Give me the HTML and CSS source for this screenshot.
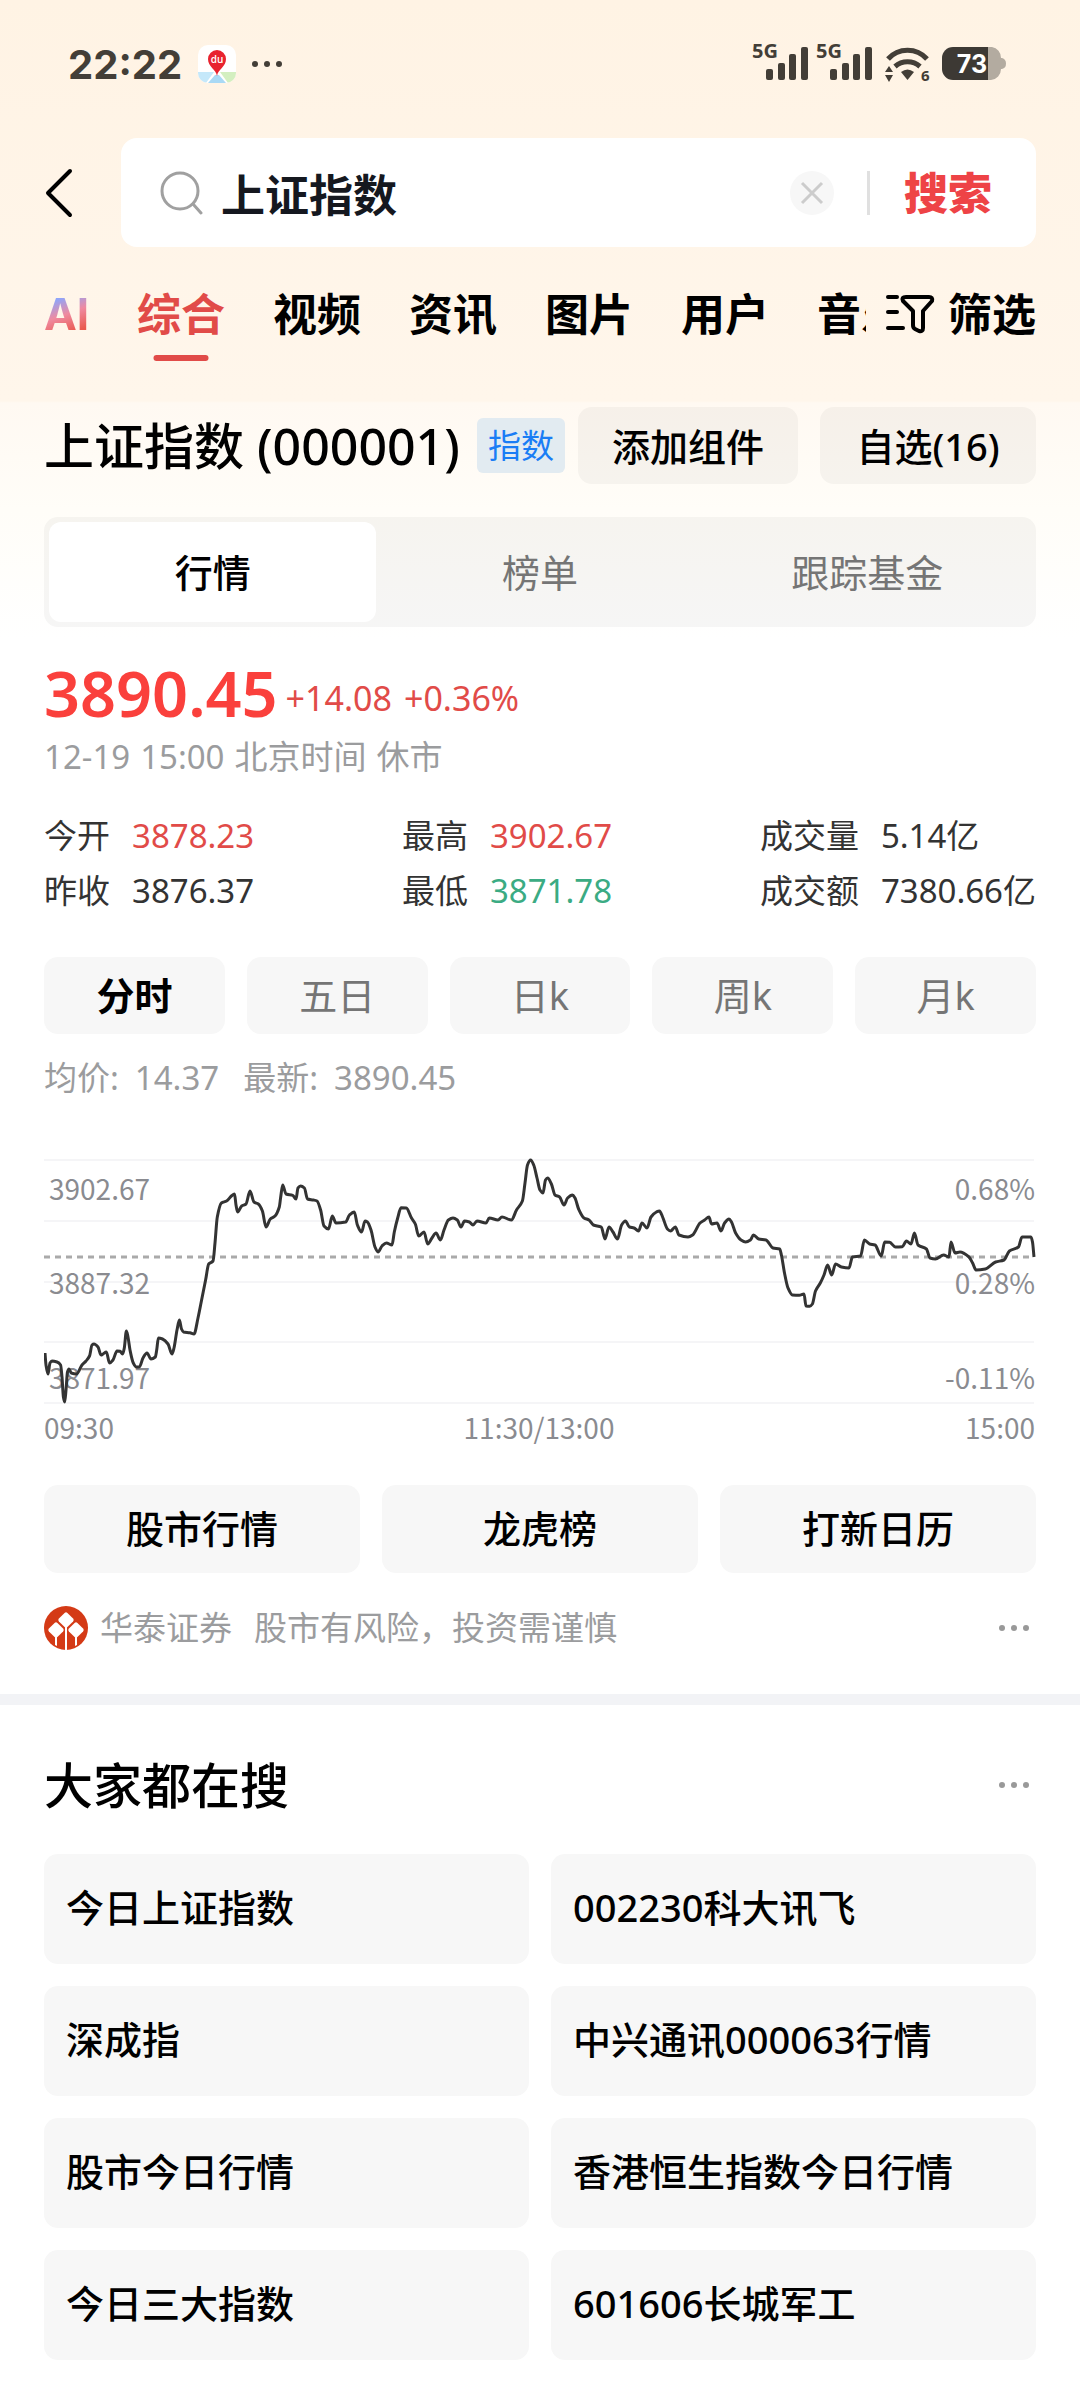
FILE: index.html
```html
<!DOCTYPE html>
<html lang="zh-CN">
  <head>
    <meta charset="utf-8" />
    <meta name="viewport" content="width=device-width, initial-scale=1.0" />
    <title>上证指数</title>
    <link rel="stylesheet" href="styles.css">
  </head>
  <body>
    <header class="header">
      <div class="status-bar">
        <span class="status-time">22:22</span>
        <svg class="map-icon" width="38" height="38" viewBox="0 0 38 38" aria-hidden="true">
          <defs>
            <clipPath id="mapClip"><rect width="38" height="38" rx="10" /></clipPath>
          </defs>
          <g clip-path="url(#mapClip)">
            <rect width="38" height="38" fill="#fff" />
            <path d="M0 27h16L8 38H0z" fill="#c5e8fa" />
            <path d="M22 27h16v11h-8z" fill="#d3efc0" />
            <path d="M17 30h4l7 8H10z" fill="#a9d9f5" />
          </g>
          <path d="M19 31c-1-7-9-9-9-17a9 9 0 0 1 18 0c0 8-8 10-9 17z" fill="#e8232f" />
          <text x="19" y="18" class="map-icon-text">du</text>
        </svg>
        <svg class="status-more" width="32" height="8" viewBox="0 0 32 8" aria-hidden="true">
          <circle cx="4" cy="4" r="3" /><circle cx="16" cy="4" r="3" /><circle cx="28" cy="4" r="3" />
        </svg>
        <div class="status-right">
          <svg width="57" height="56" viewBox="0 -5 57 56" aria-hidden="true">
            <text x="0" y="17" class="signal-text">5G</text>
            <rect x="14" y="28" width="7" height="11" rx="2" />
            <rect x="26" y="22" width="7" height="17" rx="2" />
            <rect x="37" y="13" width="7" height="26" rx="2" />
            <rect x="49" y="6" width="7" height="33" rx="2" />
          </svg>
          <svg width="57" height="56" viewBox="0 -5 57 56" aria-hidden="true">
            <text x="0" y="17" class="signal-text">5G</text>
            <rect x="14" y="28" width="7" height="11" rx="2" />
            <rect x="26" y="22" width="7" height="17" rx="2" />
            <rect x="37" y="13" width="7" height="26" rx="2" />
            <rect x="49" y="6" width="7" height="33" rx="2" />
          </svg>
          <svg class="wifi-icon" width="48" height="56" viewBox="0 -10 48 56" aria-hidden="true">
            <path d="M4 13A26 26 0 0 1 43 13M11 20.5A19 19 0 0 1 36 20.5" fill="none" stroke="#433e37" stroke-width="5" />
            <path d="M17 26q6.500-5 13 0l-6.500 8z" />
            <path d="M5 20l4 6H1zM5 36l4-7H1z" />
            <text x="37" y="35" class="wifi-text">6</text>
          </svg>
          <svg class="battery-icon" width="64" height="56" viewBox="0 -5 64 56" aria-hidden="true">
            <path d="M46 6h4a11 11 0 0 1 9 11h1q4 1 4 5.500t-4 5.500h-1a11 11 0 0 1-10 11h-3z" fill="#b3aba0" />
            <path d="M11 6h35v33H11A11 11 0 0 1 0 28V17A11 11 0 0 1 11 6z" fill="#3d3934" />
            <text x="30" y="32" class="battery-text">73</text>
          </svg>
        </div>
      </div>

      <form class="search-row">
        <a class="back" href="#" aria-label="返回">
          <svg width="30" height="50" viewBox="0 0 30 50">
            <path d="M26 3L4 25l22 22" fill="none" stroke="#000" stroke-width="4" stroke-linecap="round" stroke-linejoin="round" />
          </svg>
        </a>
        <div class="search-box">
          <svg width="44" height="46" viewBox="0 0 44 46" aria-hidden="true">
            <circle cx="21" cy="21" r="18" fill="none" stroke="#a0a0a0" stroke-width="3" />
            <path d="M34 34l8 9" stroke="#a0a0a0" stroke-width="3" stroke-linecap="round" />
          </svg>
          <input class="search-input" type="text" value="上证指数" aria-label="搜索词" />
          <button class="clear" type="button" aria-label="清空">
            <svg width="44" height="44" viewBox="0 0 44 44">
              <circle cx="22" cy="22" r="22" fill="#f7f7f7" />
              <path d="M12 12l20 20M32 12L12 32" stroke="#ccc" stroke-width="3" />
            </svg>
          </button>
          <span class="divider"></span>
          <button class="search-button" type="button">搜索</button>
        </div>
      </form>

      <div class="tabs-row">
        <nav class="tabs">
          <a class="tab tab-ai" href="#">AI</a>
          <a class="tab active" href="#">综合</a>
          <a class="tab" href="#">视频</a>
          <a class="tab" href="#">资讯</a>
          <a class="tab" href="#">图片</a>
          <a class="tab" href="#">用户</a>
          <a class="tab" href="#">音乐</a>
        </nav>
        <button class="filter" type="button">
          <svg width="50" height="40" viewBox="0 0 50 40" fill="none" stroke="#000" stroke-width="4" stroke-linecap="round" stroke-linejoin="round" aria-hidden="true">
            <path d="M2 3h9M2 18h9M2 34h15" />
            <path d="M20 3h23q4 0 3 4L37 17v17q0 4-4 3l-4-2q-2-1-2-4V17L17 7q-2-4 3-4z" />
          </svg>
          筛选
        </button>
      </div>
    </header>

    <main>
      <section class="stock">
        <div class="title-row">
          <h1 class="stock-title">上证指数 (000001)</h1>
          <span class="tag">指数</span>
          <button class="action" type="button">添加组件</button>
          <button class="action action-fav" type="button">自选(16)</button>
        </div>

        <div class="segment">
          <button class="segment-item active" type="button">行情</button>
          <button class="segment-item" type="button">榜单</button>
          <button class="segment-item" type="button">跟踪基金</button>
        </div>

        <div class="price-row">
          <span class="price">3890.45</span>
          <span class="change">+14.08</span>
          <span class="change">+0.36%</span>
        </div>
        <p class="price-time"><span>12-19</span><span>15:00</span><span>北京时间</span><span>休市</span></p>

        <dl class="quotes">
          <div class="quote"><dt>今开</dt><dd class="up">3878.23</dd></div>
          <div class="quote"><dt>最高</dt><dd class="up">3902.67</dd></div>
          <div class="quote"><dt>成交量</dt><dd>5.14亿</dd></div>
          <div class="quote"><dt>昨收</dt><dd>3876.37</dd></div>
          <div class="quote"><dt>最低</dt><dd class="down">3871.78</dd></div>
          <div class="quote"><dt>成交额</dt><dd>7380.66亿</dd></div>
        </dl>

        <div class="periods">
          <button class="period active" type="button">分时</button>
          <button class="period" type="button">五日</button>
          <button class="period" type="button">日k</button>
          <button class="period" type="button">周k</button>
          <button class="period" type="button">月k</button>
        </div>

        <p class="averages">
          <span class="average"><span>均价:</span><span>14.37</span></span>
          <span class="average"><span>最新:</span><span>3890.45</span></span>
        </p>

        <svg class="chart" viewBox="0 0 992 300" role="img" aria-label="分时走势">
          <g stroke="#f5f5f7" stroke-width="2">
            <path d="M0 10H990M0 71H990M0 132H990M0 192H990M0 253H990" />
          </g>
          <path d="M0 107H990" stroke="#aaa" stroke-width="3" stroke-dasharray="6 5" />
          <g class="chart-label">
            <text x="5" y="50">3902.67</text>
            <text x="5" y="144">3887.32</text>
            <text x="5" y="239">3871.97</text>
            <g text-anchor="end">
              <text x="991" y="50">0.68%</text>
              <text x="991" y="144">0.28%</text>
              <text x="991" y="239">-0.11%</text>
            </g>
            <text x="0" y="289">09:30</text>
            <text x="495" y="289" text-anchor="middle">11:30/13:00</text>
            <text x="991" y="289" text-anchor="end">15:00</text>
          </g>
          <path id="chartLine" class="chart-line" d="" />
        </svg>

        <div class="links">
          <a class="link" href="#">股市行情</a>
          <a class="link" href="#">龙虎榜</a>
          <a class="link" href="#">打新日历</a>
        </div>

        <div class="source">
          <svg width="44" height="44" viewBox="0 0 44 44" aria-hidden="true">
            <circle cx="22" cy="22" r="22" fill="#d43a16" />
            <g fill="#fff">
              <rect x="-6" y="-6" width="12" height="12" rx="2" transform="translate(22 14) rotate(45)" />
              <rect x="-6" y="-6" width="12" height="12" rx="2" transform="translate(12 24) rotate(45)" />
              <rect x="-6" y="-6" width="12" height="12" rx="2" transform="translate(32 24) rotate(45)" />
              <path d="M21 20h2v24h-2zM11 31h2v9l-2-1zM31 31h2v8l-2 1z" />
            </g>
          </svg>
          <span>华泰证券</span>
          <span class="source-note">股市有风险，投资需谨慎</span>
          <button class="more" type="button" aria-label="更多">
            <svg width="32" height="8" viewBox="0 0 32 8">
              <circle cx="4" cy="4" r="3" /><circle cx="16" cy="4" r="3" /><circle cx="28" cy="4" r="3" />
            </svg>
          </button>
        </div>
      </section>

      <section class="hot">
        <div class="hot-header">
          <h2 class="hot-title">大家都在搜</h2>
          <button class="more" type="button" aria-label="更多">
            <svg width="32" height="8" viewBox="0 0 32 8">
              <circle cx="4" cy="4" r="3" /><circle cx="16" cy="4" r="3" /><circle cx="28" cy="4" r="3" />
            </svg>
          </button>
        </div>
        <div class="hot-grid">
          <a class="hot-item" href="#">今日上证指数</a>
          <a class="hot-item" href="#">002230科大讯飞</a>
          <a class="hot-item" href="#">深成指</a>
          <a class="hot-item" href="#">中兴通讯000063行情</a>
          <a class="hot-item" href="#">股市今日行情</a>
          <a class="hot-item" href="#">香港恒生指数今日行情</a>
          <a class="hot-item" href="#">今日三大指数</a>
          <a class="hot-item" href="#">601606长城军工</a>
        </div>
      </section>
    </main>

    <script src="chart.js"></script>
  </body>
</html>
```

FILE: styles.css
```css
:root {
  --text-color: #000000;
  --muted-color: #9b9c9e;
  --up-color: #e14b48;
  --down-color: #3bab83;
  --card-color: #f7f7f7;
  --shade-color: rgba(30, 31, 36, 0.04);
  --side: 44px;
  --gap: 22px;
}

* {
  box-sizing: border-box;
}

body {
  margin: 0;
  font-family: "Noto Sans", "Noto Sans CJK SC", sans-serif;
  font-size: 33px;
  color: var(--text-color);
  background: #fff linear-gradient(#fff3e4 0, #fff6eb 401px, #fff9f2 403px, #fffdf8 510px, #ffffff 640px) no-repeat;
}

button {
  padding: 0;
  border: none;
  background: none;
  font: inherit;
  color: inherit;
  cursor: pointer;
}

a {
  color: inherit;
  text-decoration: none;
}

svg {
  display: block;
  flex-shrink: 0;
}

h1,
h2,
p,
dl,
dd {
  margin: 0;
}

/* Status bar */
.status-bar {
  display: flex;
  align-items: center;
  height: 128px;
  padding: 0 74px 0 68px;
  fill: #433e37;
}

.status-time {
  font-family: "Inter", sans-serif;
  font-size: 40px;
  font-weight: 700;
  color: #433e37;
}

.map-icon {
  margin-left: 16px;
}

.map-icon-text {
  font: 600 10px "Open Sans", sans-serif;
  fill: #fff;
  text-anchor: middle;
}

.status-more {
  margin-left: 15px;
}

.status-right {
  display: flex;
  gap: 7px;
  margin-left: auto;
}

.signal-text {
  font: 700 20px "Open Sans", sans-serif;
}

.wifi-icon {
  margin-left: 4px;
}

.wifi-text {
  font: 700 15px "Open Sans", sans-serif;
}

.battery-icon {
  margin-left: 3px;
}

.battery-text {
  font: 700 25px "Inter", sans-serif;
  fill: #fff;
  text-anchor: middle;
}

/* Search */
.search-row {
  display: flex;
  align-items: center;
  margin: 10px var(--side) 0;
}

.back {
  flex: 0 0 77px;
}

.search-box {
  display: flex;
  flex: 1;
  align-items: center;
  min-width: 0;
  height: 109px;
  padding: 0 44px 0 38px;
  border-radius: 16px;
  background-color: #fff;
}

.search-input {
  flex: 1;
  min-width: 0;
  margin-left: 18px;
  padding: 0;
  border: none;
  outline: none;
  background: none;
  font-family: inherit;
  font-size: 44px;
  font-weight: 700;
  color: #15181f;
}

.divider {
  width: 3px;
  height: 44px;
  margin: 0 34px 0 33px;
  background-color: #e0e0e0;
}

.search-button {
  padding-bottom: 4px;
  font-size: 44px;
  font-weight: 900;
  color: #ee4346;
}

/* Tabs */
.tabs-row {
  display: flex;
  align-items: center;
  height: 154px;
  padding: 0 var(--side) 20px;
}

.tabs {
  display: flex;
  flex: 1;
  gap: 48px;
  min-width: 0;
  overflow: hidden;
}

.tab {
  position: relative;
  flex-shrink: 0;
  font-size: 44px;
  font-weight: 700;
  line-height: 98px;
}

.tab.active {
  color: var(--up-color);
}

.tab.active::after {
  position: absolute;
  left: 50%;
  bottom: 2px;
  width: 55px;
  height: 6px;
  border-radius: 3px;
  background-color: var(--up-color);
  content: "";
  transform: translateX(-50%);
}

.tab-ai {
  width: 45px;
  font-family: "Inter", sans-serif;
  font-weight: 700;
  background: linear-gradient(160deg, #8fa5fa 34%, #ef8aa0 50%, #ea5a4e 68%);
  background-clip: text;
  -webkit-background-clip: text;
  color: transparent;
}

.filter {
  display: flex;
  align-items: center;
  gap: 12px;
  margin-left: 20px;
  font-size: 44px;
  font-weight: 700;
  line-height: 98px;
}

/* Stock card */
.stock {
  padding: 6px var(--side) 44px;
}

.title-row {
  display: flex;
  align-items: center;
}

.stock-title {
  font-size: 50px;
  font-weight: 500;
  line-height: 66px;
  white-space: nowrap;
}

.tag {
  margin-left: auto;
  padding: 0 11px;
  border-radius: 6px;
  background-color: #e2ebf1;
  line-height: 55px;
  color: #1a7df5;
}

.action {
  width: 220px;
  height: 77px;
  margin-left: 13px;
  padding-bottom: 2px;
  border-radius: 14px;
  background-color: var(--shade-color);
  font-size: 38px;
  font-weight: 500;
}

.action-fav {
  width: 216px;
  margin-left: var(--gap);
}

.segment {
  display: flex;
  margin-top: 33px;
  padding: 5px;
  border-radius: 14px;
  background-color: var(--shade-color);
}

.segment-item {
  flex: 1;
  height: 100px;
  padding-bottom: 4px;
  border-radius: 12px;
  font-size: 38px;
  color: #757575;
}

.segment-item.active {
  background-color: #fff;
  font-weight: 500;
  color: var(--text-color);
}

.price-row {
  display: flex;
  align-items: center;
  margin-top: 34px;
  line-height: 64px;
}

.price {
  font-size: 63px;
  font-weight: 600;
  line-height: 64px;
  color: #fa403c;
}

.change {
  margin-left: 8px;
  padding-top: 10px;
  font-size: 34px;
  line-height: 54px;
  color: var(--up-color);
}

.change + .change {
  margin-left: 12px;
}

.price-time {
  display: flex;
  gap: 10px;
  margin-top: 10px;
  line-height: 44px;
  color: var(--muted-color);
}

.quotes {
  display: grid;
  grid-template-columns: repeat(3, auto);
  justify-content: space-between;
  margin-top: 29px;
  line-height: 55px;
  color: #333;
}

.quote {
  display: flex;
  gap: 22px;
}

.up {
  color: var(--up-color);
}

.down {
  color: var(--down-color);
}

.periods {
  display: flex;
  gap: var(--gap);
  margin-top: 39px;
}

.period {
  flex: 1;
  height: 77px;
  padding-bottom: 4px;
  border-radius: 14px;
  background-color: var(--card-color);
  font-size: 38px;
  color: #757575;
}

.period.active {
  font-weight: 700;
  color: var(--text-color);
}

.averages {
  display: flex;
  gap: 24px;
  margin-top: 22px;
  line-height: 44px;
  color: var(--muted-color);
}

.average {
  display: flex;
  gap: 16px;
}

.chart {
  width: 100%;
  margin-top: 50px;
}

.chart-label {
  font-family: "Noto Sans CJK SC", sans-serif;
  font-size: 28px;
  fill: #8a8b90;
}

.chart-line {
  fill: none;
  stroke: #333;
  stroke-width: 3;
  stroke-linejoin: round;
}

.links {
  display: flex;
  gap: var(--gap);
  margin-top: 35px;
}

.link {
  flex: 1;
  padding-bottom: 2px;
  border-radius: 14px;
  background-color: var(--card-color);
  font-size: 38px;
  font-weight: 500;
  line-height: 86px;
  text-align: center;
}

.source {
  display: flex;
  align-items: center;
  margin-top: 33px;
  line-height: 44px;
  gap: 12px;
  color: var(--muted-color);
}

.source-note {
  margin-left: 10px;
}

.more {
  margin-left: auto;
  padding: 18px 6px;
  fill: #999;
}

/* Hot searches */
.hot {
  padding: 47px var(--side) 40px;
  border-top: 11px solid #f2f3f6;
}

.hot-header {
  display: flex;
  align-items: center;
}

.hot-title {
  font-size: 49px;
  font-weight: 500;
  line-height: 66px;
}

.hot-grid {
  display: grid;
  grid-template-columns: 1fr 1fr;
  gap: var(--gap);
  margin-top: 36px;
}

.hot-item {
  padding: 0 22px 4px;
  border-radius: 14px;
  background-color: var(--card-color);
  font-size: 38px;
  font-weight: 500;
  line-height: 106px;
}
```

FILE: chart.js
```js
// Intraday points, in chart viewBox units
const points = [
  [1, 203], [2, 215], [4, 224], [6, 213], [8, 211], [13, 212], [16.6, 215], [18, 227], [19.4, 247],
  [20.7, 252], [22, 240], [23.5, 222], [25, 219], [27.3, 223], [32.5, 224], [38, 215], [42, 211],
  [45.5, 206], [48, 195], [50, 194], [54, 197], [57, 205], [59, 204], [62.4, 202], [65.5, 213],
  [69, 210], [73, 201], [76, 201.3], [78.6, 204], [80.3, 198], [82.4, 181], [84, 187], [86, 200],
  [89.3, 213], [92.4, 217], [95.5, 216.700], [99, 208], [103, 203], [107, 209], [111.3, 207],
  [112.7, 200], [114.4, 188], [118.5, 189], [124, 194], [128, 204], [130, 198], [133, 180],
  [135.4, 170], [137.5, 179], [139.5, 182], [146, 182.7], [150, 184], [154, 168], [158, 148],
  [161.6, 130], [164.7, 114], [169, 111], [171, 93], [173.3, 67], [177.4, 53], [182.6, 51],
  [187.4, 46], [190.5, 44], [192, 55], [193.6, 62], [197.7, 56], [202, 54], [206, 41], [210, 52],
  [214.3, 54], [218.4, 61], [222, 77], [226.3, 69], [231, 66], [235.3, 57], [236.7, 47],
  [238.7, 35], [242, 44], [248.7, 45.3], [252, 49], [254, 38], [256.6, 36], [260.4, 38],
  [263.5, 49], [269.4, 50], [273, 51], [276.6, 60], [280, 76], [284.5, 79], [288.3, 66],
  [292, 73], [301.7, 72], [305.5, 65], [310.3, 62], [313.4, 75], [317.6, 82], [321, 71],
  [323.4, 72], [327, 80], [331, 97], [334, 102], [338, 96], [342.4, 93], [348, 95], [350.3, 82],
  [353.7, 68], [357, 57.7], [362.3, 58], [367.5, 68], [371.3, 74], [374.7, 86], [380, 82],
  [383.7, 94], [388, 88], [392, 83], [396.4, 90], [400, 80], [404.4, 70], [409, 68], [413.3, 70],
  [417, 77], [420.5, 71], [425.4, 72], [429, 75], [433, 71], [442, 73], [445.3, 68], [454, 70],
  [458, 67], [467.4, 70], [472.5, 60], [478.4, 51], [481, 33], [483.5, 15], [486.6, 10],
  [489.7, 15], [493, 28], [496, 40], [499, 43], [501.5, 30], [503.6, 28], [507.4, 34], [511, 45],
  [515.6, 47], [520, 55], [523.6, 48], [528.4, 45], [531, 48], [534.6, 59], [540, 68], [545, 70],
  [549.4, 75], [557.3, 77], [561, 89], [565, 77], [569, 82], [573.5, 89], [577.6, 75], [581.4, 71],
  [585.5, 77], [590, 78], [594.5, 81], [598, 73], [603, 78], [607, 67], [612.4, 62], [615.5, 61],
  [618.6, 67], [623.4, 79], [626.5, 81], [631.3, 77], [635, 85], [644, 87], [648.6, 85], [656, 73],
  [660.6, 70], [665, 67], [667.5, 74], [673, 73], [677, 81], [680.6, 73], [685, 69], [687.5, 72],
  [691.6, 83], [697, 90], [701.6, 92], [706.4, 90], [709.5, 85], [714.7, 89], [722, 90], [729, 98],
  [735.7, 99], [737.4, 105], [740.5, 123], [744, 138], [748.4, 145], [755.3, 145.3], [760, 144],
  [762, 156], [765.7, 156.3], [768.4, 154], [771.5, 141], [776.3, 133], [780, 125], [783.6, 115],
  [787.7, 125], [791.5, 114], [797.4, 117], [805, 118], [808.4, 107], [816.6, 106], [820.4, 90],
  [825.6, 94], [831, 95], [837.3, 106], [840.7, 92], [845.6, 92.3], [851.4, 97], [858.3, 96.7],
  [862.4, 91], [867, 94], [870.4, 83], [874, 95], [882.4, 99], [886, 108], [891.4, 109],
  [899.6, 105], [905, 107], [907, 92], [911, 103], [916, 102], [925, 107], [928.6, 113],
  [932, 120], [941.3, 119], [951.6, 112], [960, 110], [965.4, 101], [974.4, 97], [978, 87],
  [987, 87], [988.5, 92], [990, 107]
];

// Monotone cubic curve, so the line never overshoots its points
function buildPath(pts) {
  const slopes = pts.slice(1).map((p, i) => (p[1] - pts[i][1]) / (p[0] - pts[i][0]));
  const tangents = pts.map((p, i) => {
    const a = slopes[i - 1];
    const b = slopes[i];
    if (a === undefined) return b;
    if (b === undefined) return a;
    return a * b <= 0 ? 0 : (2 * a * b) / (a + b);
  });

  let d = `M${pts[0][0]} ${pts[0][1]}`;
  for (let i = 1; i < pts.length; i++) {
    const [x0, y0] = pts[i - 1];
    const [x1, y1] = pts[i];
    const h = (x1 - x0) / 3;
    d += `C${x0 + h} ${y0 + h * tangents[i - 1]} ${x1 - h} ${y1 - h * tangents[i]} ${x1} ${y1}`;
  }
  return d;
}

document.getElementById("chartLine").setAttribute("d", buildPath(points));
```
